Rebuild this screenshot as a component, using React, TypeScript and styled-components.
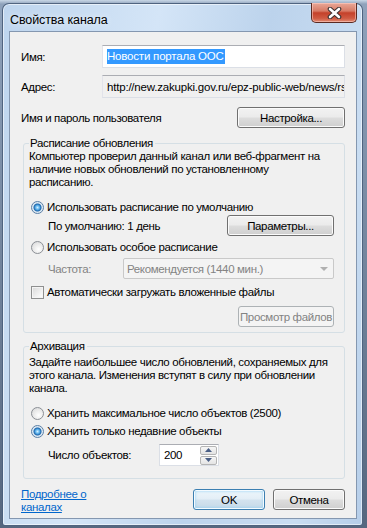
import React from 'react';
import styled, { createGlobalStyle, css } from 'styled-components';

const GlobalStyle = createGlobalStyle`
  html, body {
    margin: 0;
    padding: 0;
  }
  body {
    width: 367px;
    height: 528px;
    overflow: hidden;
    background: linear-gradient(180deg, #c9d7e6 0px, #8fa2bb 4px, #56677f 100%);
    font-family: 'Segoe UI', 'Liberation Sans', Arial, sans-serif;
    font-size: 11.5px;
    letter-spacing: -0.35px;
    color: #000;
  }
`;

const Desktop = styled.div`
  box-sizing: border-box;
  width: 367px;
  height: 528px;
  padding: 3px 4px 2px 2px;
`;

const Window = styled.div`
  box-sizing: border-box;
  height: 523px;
  display: flex;
  flex-direction: column;
  padding: 0 5px 6px 6px;
  border: 1px solid rgba(40, 60, 90, 0.75);
  border-radius: 7px 7px 3px 3px;
  background: linear-gradient(100deg, #bed5ee 0%, #d4e5f7 35%, #bcd3ec 60%, #c9ddf2 85%, #b6cee9 100%);
  box-shadow: inset 0 0 0 1px rgba(255, 255, 255, 0.55);
`;

const TitleBar = styled.div`
  height: 27px;
  display: flex;
  align-items: flex-start;
  justify-content: space-between;
`;

const Title = styled.span`
  margin: 9px 0 0 1px;
  font-size: 12.5px;
  letter-spacing: -0.1px;
  line-height: 14px;
  color: #000;
  text-shadow: 0 0 6px rgba(255, 255, 255, 0.9);
`;

const CloseButton = styled.div`
  box-sizing: border-box;
  width: 46px;
  height: 20px;
  margin: -1px 0 0 0;
  display: flex;
  align-items: center;
  justify-content: center;
  border: 1px solid #5a2a22;
  border-top: none;
  border-radius: 0 0 5px 5px;
  background: linear-gradient(180deg, #e9a898 0%, #d77b66 42%, #c4412a 52%, #cf5a42 80%, #e08a72 100%);
  box-shadow: inset 0 0 0 1px rgba(255, 210, 200, 0.55);
`;

const Client = styled.div`
  flex: 1;
  display: flex;
  flex-direction: column;
  padding: 13px 11px 0 11px;
  border: 1px solid #8497b0;
  background: #f0f0f0;
`;

const FieldRow = styled.div<{ $mt?: number; $spread?: boolean }>`
  display: flex;
  align-items: center;
  justify-content: ${p => (p.$spread ? 'space-between' : 'flex-start')};
  margin-top: ${p => p.$mt ?? 0}px;
`;

const FieldLabel = styled.span`
  width: 81px;
  flex-shrink: 0;
`;

const TextBox = styled.div<{ $readOnly?: boolean }>`
  box-sizing: border-box;
  flex: 1;
  min-width: 0;
  height: 23px;
  display: flex;
  align-items: center;
  padding: 0 0 0 4px;
  overflow: hidden;
  white-space: nowrap;
  letter-spacing: -0.2px;
  border: 1px solid #dbdfe6;
  border-top-color: #abadb3;
  border-left-color: #e2e3ea;
  background: ${p => (p.$readOnly ? '#f0f0f0' : '#fff')};
  color: #000;
`;

const Selection = styled.span`
  background: #3399ff;
  color: #fff;
  line-height: 15px;
  padding: 0 1px 0 0;
`;

const PushButton = styled.div<{ $w: number; $variant?: 'default' | 'disabled' }>`
  box-sizing: border-box;
  width: ${p => p.$w}px;
  height: 21px;
  flex-shrink: 0;
  display: flex;
  align-items: center;
  justify-content: center;
  white-space: nowrap;
  border-radius: 3px;
  border: 1px solid #707070;
  background: linear-gradient(180deg, #f2f2f2 0%, #ebebeb 48%, #dddddd 52%, #cfcfcf 100%);
  box-shadow: inset 0 0 0 1px #fbfbfb;
  ${p =>
    p.$variant === 'default' &&
    css`
      border-color: #3c7fb1;
      background: linear-gradient(180deg, #eef6fb 0%, #e3eef6 48%, #d3e3ef 52%, #c6d9e8 100%);
      box-shadow: inset 0 0 0 1px #f4fbff, inset 0 0 3px 1px #8fd0f3;
    `}
  ${p =>
    p.$variant === 'disabled' &&
    css`
      border-color: #adb2b5;
      background: #f4f4f4;
      box-shadow: none;
      color: #838383;
    `}
`;

const GroupBox = styled.fieldset<{ $mt: number; $pb: number }>`
  display: flex;
  flex-direction: column;
  min-width: 0;
  margin: ${p => p.$mt}px 0 0 2px;
  padding: 0 10px ${p => p.$pb}px 5px;
  border: 1px solid #d5dfe5;
  border-radius: 3px;
`;

const GroupLegend = styled.legend`
  padding: 0 2px 0 1px;
  line-height: 13px;
`;

const Description = styled.p<{ $mt?: number }>`
  margin: ${p => p.$mt ?? 0}px 0 0 0;
  line-height: 13px;
  white-space: nowrap;
`;

const OptionRow = styled.label<{ $mt: number }>`
  display: flex;
  align-items: center;
  gap: 3px;
  height: 14px;
  margin: ${p => p.$mt}px 0 0 2px;
  white-space: nowrap;
`;

const RadioMark = styled.span<{ $checked?: boolean }>`
  box-sizing: border-box;
  width: 13px;
  height: 13px;
  flex-shrink: 0;
  border-radius: 50%;
  border: 1px solid #8b8f95;
  background: radial-gradient(circle at 60% 65%, #ffffff 0%, #e6e6e6 60%, #cfd2d6 100%);
  ${p =>
    p.$checked &&
    css`
      border-color: #5a7fa6;
      background: radial-gradient(circle at 50% 50%, #d2f0ff 0px, #5fb3ec 2px, #1d67ad 3.5px, #d9e6f1 4.5px, #f3f6f9 100%);
    `}
`;

const CheckMark = styled.span`
  box-sizing: border-box;
  width: 13px;
  height: 13px;
  flex-shrink: 0;
  border: 1px solid #8e8f8f;
  background: linear-gradient(135deg, #d8d8d8 0%, #f4f4f4 70%, #ffffff 100%);
  box-shadow: inset 0 0 0 1px #f4f4f4;
`;

const IndentRow = styled.div<{ $mt: number; $start?: boolean }>`
  display: flex;
  align-items: center;
  justify-content: ${p => (p.$start ? 'flex-start' : 'space-between')};
  margin: ${p => p.$mt}px 0 0 0;
  padding-left: 19px;
`;

const DisabledLabel = styled.span`
  width: 75px;
  flex-shrink: 0;
  color: #838383;
`;

const ComboBox = styled.div`
  box-sizing: border-box;
  flex: 1;
  height: 21px;
  display: flex;
  align-items: center;
  justify-content: space-between;
  padding: 0 5px 0 3px;
  border: 1px solid #c9c9c9;
  border-radius: 2px;
  background: #f4f4f4;
  color: #838383;
`;

const ComboArrow = styled.span`
  width: 0;
  height: 0;
  border-left: 4px solid transparent;
  border-right: 4px solid transparent;
  border-top: 4px solid #b0b0b0;
`;

const RightButtonRow = styled.div<{ $mt: number }>`
  display: flex;
  justify-content: flex-end;
  margin-top: ${p => p.$mt}px;
`;

const SpinLabel = styled.span`
  width: 111px;
  flex-shrink: 0;
`;

const SpinBox = styled.div`
  box-sizing: border-box;
  width: 60px;
  height: 22px;
  display: flex;
  align-items: center;
  justify-content: space-between;
  padding: 0 1px 0 4px;
  border: 1px solid #dbdfe6;
  border-top-color: #abadb3;
  background: #fff;
`;

const SpinButtons = styled.div`
  display: flex;
  flex-direction: column;
  gap: 1px;
`;

const SpinButton = styled.div`
  box-sizing: border-box;
  width: 17px;
  height: 9px;
  display: flex;
  align-items: center;
  justify-content: center;
  border: 1px solid #b5b5b5;
  border-radius: 2px;
  background: linear-gradient(180deg, #f6f6f6 0%, #e4e4e4 100%);
`;

const Footer = styled.div`
  display: flex;
  align-items: flex-start;
  justify-content: space-between;
  margin-top: 9px;
`;

const HelpLink = styled.a`
  color: #0066cc;
  text-decoration: underline;
  line-height: 13px;
  cursor: pointer;
`;

const ButtonGroup = styled.div`
  display: flex;
  gap: 8px;
  margin-top: 1px;
`;

const CloseGlyph = () => (
  <svg width="15" height="12" viewBox="0 0 15 12">
    <path d="M3 2 L12 10 M12 2 L3 10" stroke="#3a3030" strokeWidth="4.6" strokeLinecap="round" />
    <path d="M3 2 L12 10 M12 2 L3 10" stroke="#ffffff" strokeWidth="2.6" strokeLinecap="round" />
  </svg>
);

const Arrow = ({ up }: { up?: boolean }) => (
  <svg width="7" height="4" viewBox="0 0 7 4">
    <path d={up ? 'M0 4 L3.5 0 L7 4 Z' : 'M0 0 L3.5 4 L7 0 Z'} fill="#4a5f86" />
  </svg>
);

const App: React.FC = () => {
  return (
    <>
      <GlobalStyle />
      <Desktop>
        <Window>
          <TitleBar>
            <Title>Свойства канала</Title>
            <CloseButton>
              <CloseGlyph />
            </CloseButton>
          </TitleBar>
          <Client>
            <FieldRow>
              <FieldLabel>Имя:</FieldLabel>
              <TextBox>
                <Selection>Новости портала ООС</Selection>
              </TextBox>
            </FieldRow>
            <FieldRow $mt={7}>
              <FieldLabel>Адрес:</FieldLabel>
              <TextBox $readOnly>http://new.zakupki.gov.ru/epz-public-web/news/rss</TextBox>
            </FieldRow>
            <FieldRow $mt={9} $spread>
              <span>Имя и пароль пользователя</span>
              <PushButton $w={108}>Настройка...</PushButton>
            </FieldRow>

            <GroupBox $mt={9} $pb={5}>
              <GroupLegend>Расписание обновления</GroupLegend>
              <Description>
                Компьютер проверил данный канал или веб-фрагмент на
                <br />
                наличие новых обновлений по установленному
                <br />
                расписанию.
              </Description>
              <OptionRow $mt={11}>
                <RadioMark $checked />
                Использовать расписание по умолчанию
              </OptionRow>
              <IndentRow $mt={1}>
                <span>По умолчанию: 1 день</span>
                <PushButton $w={107}>Параметры...</PushButton>
              </IndentRow>
              <OptionRow $mt={4}>
                <RadioMark />
                Использовать особое расписание
              </OptionRow>
              <IndentRow $mt={4}>
                <DisabledLabel>Частота:</DisabledLabel>
                <ComboBox>
                  <span>Рекомендуется (1440 мин.)</span>
                  <ComboArrow />
                </ComboBox>
              </IndentRow>
              <OptionRow $mt={6}>
                <CheckMark />
                Автоматически загружать вложенные файлы
              </OptionRow>
              <RightButtonRow $mt={7}>
                <PushButton $w={96} $variant="disabled">
                  Просмотр файлов
                </PushButton>
              </RightButtonRow>
            </GroupBox>

            <GroupBox $mt={7} $pb={12}>
              <GroupLegend>Архивация</GroupLegend>
              <Description $mt={3}>
                Задайте наибольшее число обновлений, сохраняемых для
                <br />
                этого канала. Изменения вступят в силу при обновлении
                <br />
                канала.
              </Description>
              <OptionRow $mt={11}>
                <RadioMark />
                Хранить максимальное число объектов (2500)
              </OptionRow>
              <OptionRow $mt={4}>
                <RadioMark $checked />
                Хранить только недавние объекты
              </OptionRow>
              <IndentRow $mt={6} $start>
                <SpinLabel>Число объектов:</SpinLabel>
                <SpinBox>
                  <span>200</span>
                  <SpinButtons>
                    <SpinButton>
                      <Arrow up />
                    </SpinButton>
                    <SpinButton>
                      <Arrow />
                    </SpinButton>
                  </SpinButtons>
                </SpinBox>
              </IndentRow>
            </GroupBox>

            <Footer>
              <HelpLink>
                Подробнее о
                <br />
                каналах
              </HelpLink>
              <ButtonGroup>
                <PushButton $w={72} $variant="default">
                  OK
                </PushButton>
                <PushButton $w={72}>Отмена</PushButton>
              </ButtonGroup>
            </Footer>
          </Client>
        </Window>
      </Desktop>
    </>
  );
};

export default App;
